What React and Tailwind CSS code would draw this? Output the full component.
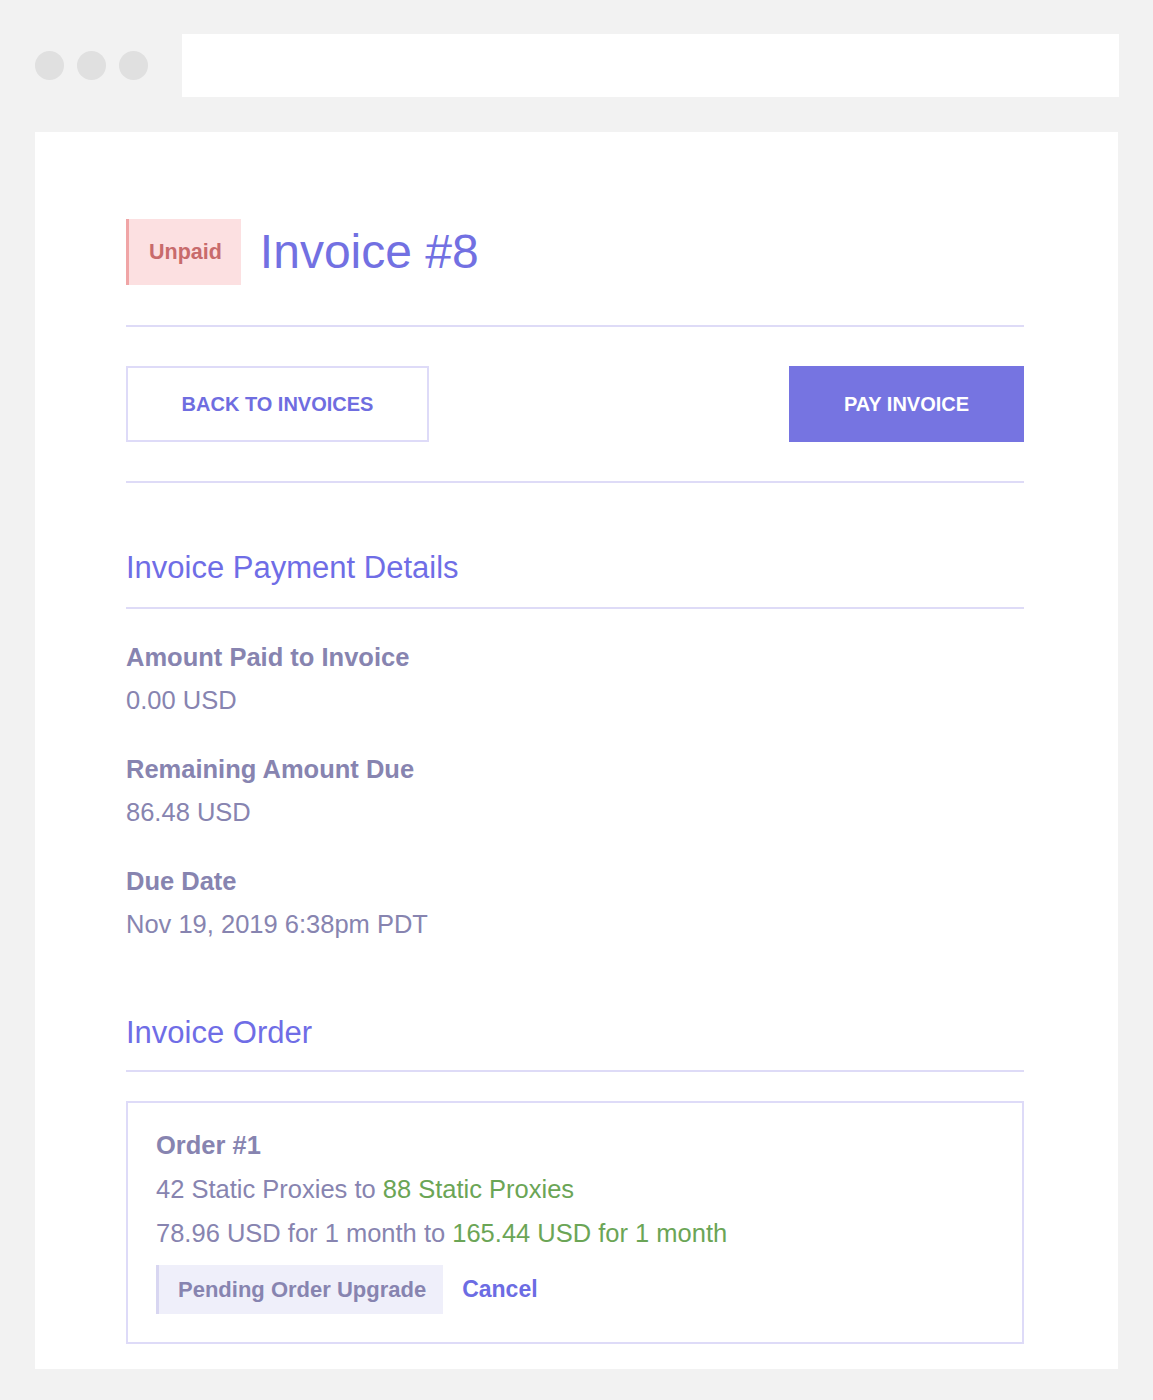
const Divider = () => <div className="h-[2px] bg-[#dedbf7]" />;

const Field = ({ label, value }) => (
    <div>
        <div className="text-[25.5px] leading-[30px] font-bold text-[#8784b0]">{label}</div>
        <div className="mt-[13px] text-[25.5px] leading-[30px] text-[#8784b0]">{value}</div>
    </div>
);

export default function App() {
    return (
        <div
            className="min-h-[1400px] bg-[#f2f2f2] px-[35px] pb-[32px]"
            style={{ fontFamily: '"Liberation Sans", Arial, sans-serif' }}
        >
            {/* Browser chrome */}
            <div className="flex items-center pt-[34px]">
                <div className="flex gap-[13px]">
                    <span className="w-[29px] h-[29px] rounded-full bg-[#e0e0e0]" />
                    <span className="w-[29px] h-[29px] rounded-full bg-[#e0e0e0]" />
                    <span className="w-[29px] h-[29px] rounded-full bg-[#e0e0e0]" />
                </div>
                <div className="ml-[34px] mr-[-1px] flex-1 h-[63px] bg-white" />
            </div>

            {/* Card */}
            <div className="mt-[35px] bg-white pl-[91px] pr-[94px] pt-[87px] pb-[25px]">
                <div className="flex items-center gap-[19px]">
                    <div className="h-[66px] flex items-center border-l-[3px] border-[#f0a5a6] bg-[#fce0e1] pl-[20px] pr-[19px] text-[21.5px] font-bold text-[#c86b6c]">
                        Unpaid
                    </div>
                    <h1 className="text-[48px] leading-none text-[#7270e2]">Invoice #8</h1>
                </div>

                <div className="mt-[40px]"><Divider /></div>

                <div className="mt-[39px] flex justify-between">
                    <button className="w-[303px] h-[76px] border-2 border-[#dedbf8] text-[20px] font-bold text-[#6f6de0] uppercase">
                        Back to Invoices
                    </button>
                    <button className="w-[235px] h-[76px] bg-[#7674e1] text-[20px] font-bold text-white uppercase">
                        Pay Invoice
                    </button>
                </div>

                <div className="mt-[39px]"><Divider /></div>

                {/* Payment details */}
                <h2 className="mt-[67px] text-[31px] leading-[36px] text-[#6f6de6]">Invoice Payment Details</h2>
                <div className="mt-[21px]"><Divider /></div>

                <div className="mt-[33px] flex flex-col gap-[39px]">
                    <Field label="Amount Paid to Invoice" value="0.00 USD" />
                    <Field label="Remaining Amount Due" value="86.48 USD" />
                    <Field label="Due Date" value="Nov 19, 2019 6:38pm PDT" />
                </div>

                {/* Order */}
                <h2 className="mt-[76px] text-[31px] leading-[36px] text-[#6f6de6]">Invoice Order</h2>
                <div className="mt-[19px]"><Divider /></div>

                <div className="mt-[29px] border-2 border-[#dedbf8] px-[28px] pt-[27px] pb-[28px]">
                    <div className="text-[25.5px] leading-[30px] font-bold text-[#8784b0]">Order #1</div>
                    <div className="mt-[14px] text-[25.5px] leading-[30px] text-[#8784b0]">
                        42 Static Proxies to <span className="text-[#6ba556]">88 Static Proxies</span>
                    </div>
                    <div className="mt-[14px] text-[25.5px] leading-[30px] text-[#8784b0]">
                        78.96 USD for 1 month to <span className="text-[#6ba556]">165.44 USD for 1 month</span>
                    </div>
                    <div className="mt-[17px] flex items-center gap-[19px]">
                        <div className="h-[49px] flex items-center border-l-[3px] border-[#d8d6f1] bg-[#efeffa] pl-[19px] pr-[17px] text-[22px] font-bold text-[#8784b0]">
                            Pending Order Upgrade
                        </div>
                        <button className="text-[23px] font-bold text-[#6c6ce3]">Cancel</button>
                    </div>
                </div>
            </div>
        </div>
    );
}
